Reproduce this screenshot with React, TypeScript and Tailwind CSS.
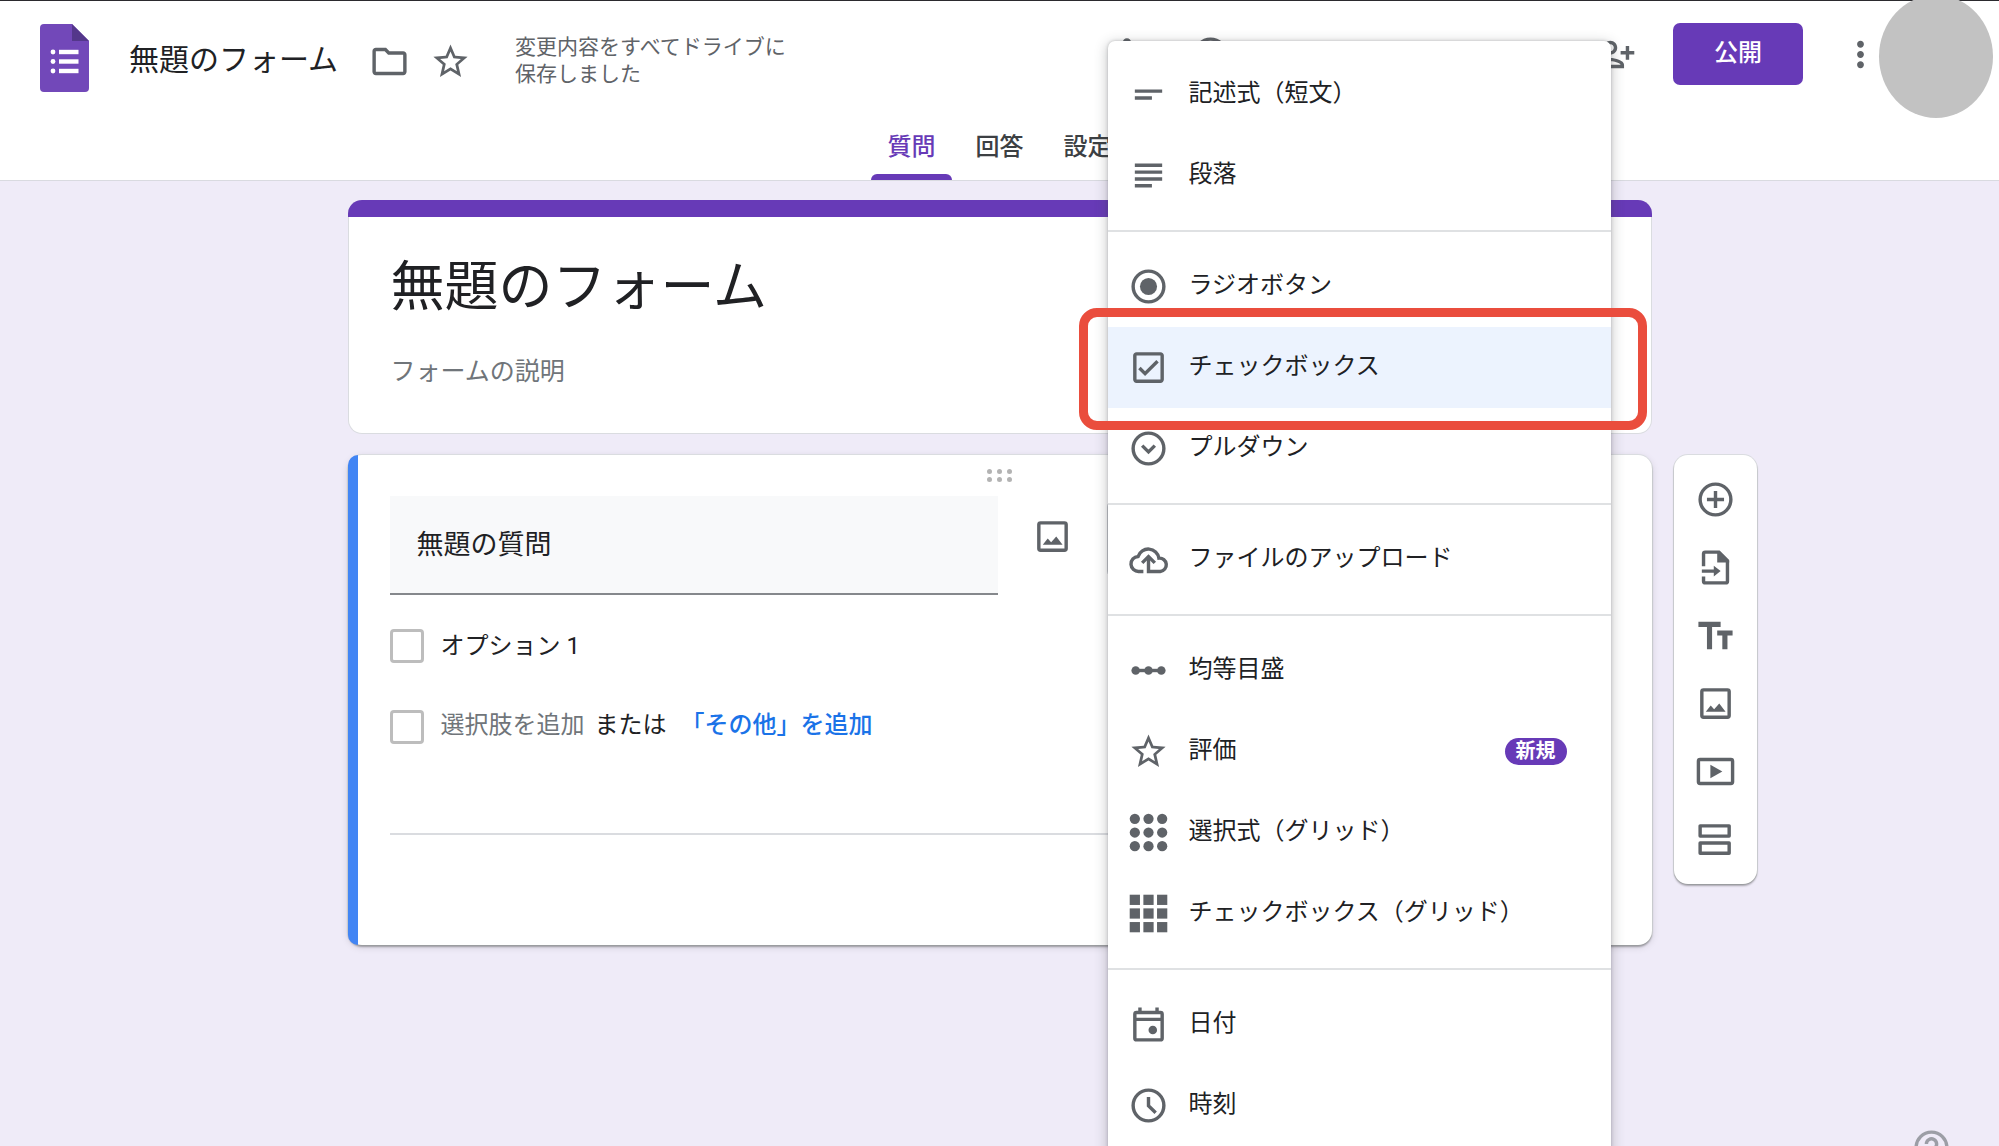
import React from "react";
import {
  MdLink,
  MdMoreVert,
  MdOutlineExtension,
  MdOutlineFolder,
  MdOutlinePalette,
  MdOutlineRemoveRedEye,
  MdRedo,
  MdStarBorder,
  MdUndo,
} from "react-icons/md";

function Icon({ children }: { children: React.ReactNode }) {
  return (
    <svg viewBox="0 0 24 24" className="size-[41px] shrink-0" fill="currentColor" aria-hidden="true">
      {children}
    </svg>
  );
}

const line = { fill: "none", stroke: "currentColor", strokeWidth: 2 };
const steps = [4, 12, 20];

const ShortText = () => <Icon><path d="M4 9h16v2H4zm0 4h10v2H4z" /></Icon>;
const Paragraph = () => <Icon><path d="M4 5h16v2H4zm0 4h16v2H4zm0 4h16v2H4zm0 4h10v2H4z" /></Icon>;
const Radio = () => (
  <Icon>
    <circle cx="12" cy="12" r="9" {...line} />
    <circle cx="12" cy="12" r="5" />
  </Icon>
);
const CheckBox = () => (
  <Icon>
    <path d="M19 3H5c-1.1 0-2 .9-2 2v14c0 1.1.9 2 2 2h14c1.1 0 2-.9 2-2V5c0-1.1-.9-2-2-2zm0 16H5V5h14v14zM17.99 9l-1.41-1.42-6.59 6.59-2.58-2.57-1.42 1.41 4 3.99z" />
  </Icon>
);
const DropDown = () => (
  <Icon>
    <circle cx="12" cy="12" r="9" {...line} />
    <path d="M8.3 10.3L12 14l3.7-3.7" {...line} />
  </Icon>
);
const CloudUpload = () => (
  <Icon>
    <path d="M9 19H6.4A4.4 4.4 0 0 1 5.9 10.2A6.3 6.3 0 0 1 18.1 11.2A3.9 3.9 0 0 1 18.9 19H12V10.4" {...line} />
    <path d="M8.3 14L12 10.3l3.7 3.7" {...line} />
  </Icon>
);
const LinearScale = () => (
  <Icon>
    <path d="M4 12h16" {...line} />
    <circle cx="4.5" cy="12" r="2.5" />
    <circle cx="12" cy="12" r="2.5" />
    <circle cx="19.5" cy="12" r="2.5" />
  </Icon>
);
const Star = () => <MdStarBorder className="size-[41px] shrink-0" aria-hidden="true" />;
const DotGrid = () => (
  <Icon>{steps.map((y) => steps.map((x) => <circle key={`${x}-${y}`} cx={x} cy={y} r="3" />))}</Icon>
);
const SquareGrid = () => (
  <Icon>
    {steps.map((y) => steps.map((x) => <rect key={`${x}-${y}`} x={x - 3} y={y - 3} width="6" height="6" />))}
  </Icon>
);
const CalendarIcon = () => (
  <Icon>
    <rect x="4" y="5" width="16" height="16" rx="1" {...line} />
    <path d="M4 9h16M7 2v3M17 2v3" {...line} />
    <circle cx="14.5" cy="15.2" r="2.5" />
  </Icon>
);
const Clock = () => (
  <Icon>
    <circle cx="12" cy="12" r="9" {...line} />
    <path d="M12 7v5.2l4.2 4" {...line} />
  </Icon>
);
const AddCircle = () => (
  <Icon>
    <circle cx="12" cy="12" r="9" {...line} />
    <path d="M12 7v10M7 12h10" {...line} />
  </Icon>
);
const ImportDoc = () => (
  <Icon>
    <path d="M5 11.2V4a1 1 0 0 1 1-1h8l5 5v12a1 1 0 0 1-1 1H6a1 1 0 0 1-1-1v-2.8" {...line} />
    <path d="M13 2.5h1.5L20 8v1h-7zM4 13.1h7V11l4 3.1-4 3.1v-2.1H4z" />
  </Icon>
);
const TextFields = () => <Icon><path d="M2 4v3h5v13h3V7h5V4H2zm20 5h-9v3h3v8h3v-8h3z" /></Icon>;
const ImageIcon = () => (
  <Icon>
    <rect x="4" y="4" width="16" height="16" rx="1" {...line} />
    <path d="M6.3 16.8l2.9-3.7 2 2.2 3-3.3 3.7 4.8z" />
  </Icon>
);
const Video = () => (
  <Icon>
    <rect x="2" y="5" width="20" height="14" rx="1" {...line} />
    <path d="M9 8v8l7-4z" />
  </Icon>
);
const Sections = () => (
  <Icon>
    <rect x="3" y="4" width="17" height="6" {...line} strokeLinejoin="round" />
    <rect x="3" y="14" width="17" height="6" {...line} strokeLinejoin="round" />
  </Icon>
);
const PersonAdd = () => (
  <Icon>
    <path d="M13 8c0-2.21-1.79-4-4-4S5 5.79 5 8s1.79 4 4 4 4-1.79 4-4zm-2 0c0 1.1-.9 2-2 2s-2-.9-2-2 .9-2 2-2 2 .9 2 2zM1 18v2h16v-2c0-2.66-5.33-4-8-4s-8 1.34-8 4zm2 0c.2-.71 3.3-2 6-2 2.69 0 5.78 1.28 6 2H3zm17-3v-3h3v-2h-3V7h-2v3h-3v2h3v3h2z" />
  </Icon>
);
const Help = () => (
  <Icon>
    <circle cx="12" cy="12" r="9" {...line} />
    <path d="M9 10a3 3 0 1 1 4.6 2.5c-1 .7-1.6 1.2-1.6 2.5M12 16v2" {...line} />
  </Icon>
);

function FormsLogo() {
  return (
    <svg viewBox="0 0 49 68" className="h-[68px] w-[49px] shrink-0" aria-hidden="true">
      <path d="M4 0h28l17 17v47a4 4 0 0 1-4 4H4a4 4 0 0 1-4-4V4a4 4 0 0 1 4-4z" fill="#7248b9" />
      <path d="M32 0l17 17H32z" fill="#54378b" />
      {[28, 37.5, 47].map((y) => (
        <g key={y} fill="#fff">
          <circle cx="13" cy={y} r="2.4" />
          <rect x="19" y={y - 2.2} width="19.5" height="4.4" />
        </g>
      ))}
    </svg>
  );
}

function IconButton({ label, children }: { label: string; children: React.ReactNode }) {
  return (
    <button type="button" aria-label={label} className="shrink-0 text-[#5f6368]">
      {children}
    </button>
  );
}

type Item = { label: string; icon: () => React.ReactElement; active?: boolean; badge?: string };

const groups: Item[][] = [
  [
    { label: "記述式（短文）", icon: ShortText },
    { label: "段落", icon: Paragraph },
  ],
  [
    { label: "ラジオボタン", icon: Radio },
    { label: "チェックボックス", icon: CheckBox, active: true },
    { label: "プルダウン", icon: DropDown },
  ],
  [{ label: "ファイルのアップロード", icon: CloudUpload }],
  [
    { label: "均等目盛", icon: LinearScale },
    { label: "評価", icon: Star, badge: "新規" },
    { label: "選択式（グリッド）", icon: DotGrid },
    { label: "チェックボックス（グリッド）", icon: SquareGrid },
  ],
  [
    { label: "日付", icon: CalendarIcon },
    { label: "時刻", icon: Clock },
  ],
];

function MenuItem({ item }: { item: Item }) {
  const Glyph = item.icon;
  return (
    <li role="none" className="relative">
      <button
        type="button"
        role="menuitem"
        className={
          item.active
            ? "flex h-[81px] w-full items-center bg-[#ecf3fe] pr-11 pl-5 text-left"
            : "flex h-[81px] w-full items-center pr-11 pl-5 text-left"
        }
      >
        <span className="text-[#5f6368]">
          <Glyph />
        </span>
        <span className="ml-5 flex-1 pb-1 whitespace-nowrap">{item.label}</span>
        {item.badge && (
          <span className="rounded-full bg-[#673ab7] px-[11px] text-xl leading-[27px] font-bold text-white">
            {item.badge}
          </span>
        )}
      </button>
      {item.active && (
        <span className="pointer-events-none absolute -top-[19px] -right-9 -bottom-[22px] -left-[29px] z-10 rounded-[18px] border-[9px] border-[#ea4d3d]" />
      )}
    </li>
  );
}

function TypeMenu() {
  return (
    <div
      role="menu"
      aria-label="質問の形式"
      className="absolute -top-[459px] left-0 z-20 w-[503px] rounded-[7px] bg-white pt-[13px] pb-3 text-2xl text-[#202124] shadow-[0_3px_12px_2px_rgba(60,64,67,0.25),0_0_3px_rgba(60,64,67,0.3)]"
    >
      {groups.map((group, i) => (
        <ul
          key={i}
          role="none"
          className={i > 0 ? "mt-[14px] border-t-2 border-[#dfe1e3] pt-[14px]" : ""}
        >
          {group.map((item) => (
            <MenuItem key={item.label} item={item} />
          ))}
        </ul>
      ))}
    </div>
  );
}

const checkboxClass = "size-[34px] shrink-0 appearance-none rounded-[4px] border-[3px] border-[#bdbdbd] bg-white";

export default function App() {
  return (
    <div className="relative h-screen overflow-hidden bg-[#efebf8] font-[Roboto,'Noto_Sans_CJK_JP',sans-serif] text-2xl text-[#202124]">
      <header className="border-t border-b border-t-[#2b2a2e] border-b-[#d9dae0] bg-white">
        <div className="flex h-[116px] items-start justify-between pr-[6px] pl-10">
          <div className="flex h-[114px] items-center">
            <FormsLogo />
            <span className="mt-1 ml-10 text-3xl whitespace-nowrap">無題のフォーム</span>
            <div className="mt-[6px] ml-[31px] flex gap-5">
              <IconButton label="フォルダに移動">
                <MdOutlineFolder className="size-[41px]" />
              </IconButton>
              <IconButton label="スターを付ける">
                <Star />
              </IconButton>
            </div>
            <p className="mt-[6px] ml-11 text-[21px] leading-[27px] text-[#5f6368]">
              変更内容をすべてドライブに
              <br />
              保存しました
            </p>
          </div>
          <div className="flex h-[106px] items-center">
            <div className="flex gap-10">
              <IconButton label="アドオン"><MdOutlineExtension className="size-[41px]" /></IconButton>
              <IconButton label="テーマをカスタマイズ"><MdOutlinePalette className="size-[41px]" /></IconButton>
              <IconButton label="プレビュー"><MdOutlineRemoveRedEye className="size-[41px]" /></IconButton>
              <IconButton label="元に戻す"><MdUndo className="size-[41px]" /></IconButton>
              <IconButton label="やり直す"><MdRedo className="size-[41px]" /></IconButton>
              <IconButton label="リンクをコピー"><MdLink className="size-[41px]" /></IconButton>
              <IconButton label="共同編集者を追加"><PersonAdd /></IconButton>
            </div>
            <button
              type="button"
              className="ml-[37px] h-[62px] w-[130px] shrink-0 rounded-[7px] bg-[#673ab7] pb-[2px] font-medium text-white"
            >
              公開
            </button>
            <div className="ml-[37px] flex">
              <IconButton label="その他"><MdMoreVert className="size-[41px]" /></IconButton>
            </div>
            <div className="mt-1 -ml-[2px] h-[123px] w-[114px] shrink-0 rounded-[50%] bg-[#c2c2c2]" />
          </div>
        </div>
        <nav className="flex h-[63px] justify-center gap-[7px] font-medium text-[#3c4043]">
          <a href="#questions" className="flex w-[81px] flex-col items-center justify-between pt-[14px] text-[#673ab7]">
            質問
            <span className="h-[6px] w-full rounded-t-[6px] bg-[#673ab7]" />
          </a>
          <a href="#responses" className="w-[81px] pt-[14px] text-center">回答</a>
          <a href="#settings" className="w-[81px] pt-[14px] text-center">設定</a>
        </nav>
      </header>

      <main className="grid grid-cols-[1fr_minmax(0,1304px)_1fr] gap-y-[21px] pt-[19px]">
        <section className="col-start-2 h-[234px] rounded-[14px] border border-t-0 border-[#dadce0] bg-white">
          <div className="-mx-px h-[17px] rounded-t-[14px] bg-[#673ab7]" />
          <div className="flex flex-col px-[42px] pt-[22px]">
            <input
              aria-label="フォームのタイトル"
              defaultValue="無題のフォーム"
              className="h-[86px] w-full text-[54px] outline-none"
            />
            <input
              aria-label="フォームの説明"
              placeholder="フォームの説明"
              className="mt-7 h-9 w-full text-[25px] outline-none placeholder:text-[#70757a]"
            />
          </div>
        </section>

        <section className="col-start-2 flex h-[490px] rounded-[14px] bg-white shadow-[0_2px_2px_rgba(0,0,0,0.3),0_0_0_1px_#dadce0,0_2px_7px_1px_rgba(0,0,0,0.1)]">
          <div className="w-[10px] shrink-0 rounded-l-[14px] bg-[#4285f4]" />
          <div className="min-w-0 flex-1 pr-[42px] pl-[32px]">
            <div className="flex h-[41px] justify-center pt-[14px]">
              <button type="button" aria-label="質問を移動" className="grid h-[13px] grid-cols-3 gap-x-[5px] gap-y-[3px]">
                {[0, 1, 2, 3, 4, 5].map((n) => (
                  <span key={n} className="size-[5px] rounded-full bg-[#b3b3b3]" />
                ))}
              </button>
            </div>
            <div className="flex items-start">
              <input
                aria-label="質問"
                defaultValue="無題の質問"
                className="h-[99px] w-[608px] border-b-2 border-[#85888c] bg-[#f8f9fa] px-[27px] pb-1 text-[27px] outline-none"
              />
              <div className="mt-5 ml-[34px] flex">
                <IconButton label="画像を追加"><ImageIcon /></IconButton>
              </div>
              <div className="relative mt-1 ml-[35px] flex-1">
                <button
                  type="button"
                  aria-haspopup="menu"
                  aria-label="チェックボックス"
                  className="-ml-px block h-[78px] w-[503px] rounded-[7px] border border-[#c4c7cc]"
                />
                <TypeMenu />
              </div>
            </div>
            <div className="mt-[33px] flex h-[36px] items-center gap-[17px]">
              <input type="checkbox" aria-label="オプション 1" className={checkboxClass} />
              <input aria-label="選択肢のテキスト" defaultValue="オプション 1" className="w-[500px] outline-none" />
            </div>
            <div className="mt-[45px] flex h-[36px] items-center">
              <input type="checkbox" aria-label="選択肢を追加" className={checkboxClass} />
              <div className="ml-[17px] flex pb-1 whitespace-nowrap">
                <button type="button" className="text-[#70757a]">選択肢を追加</button>
                <span className="ml-[10px]">または</span>
                <button type="button" className="ml-[14px] font-medium text-[#1a73e8]">「その他」を追加</button>
              </div>
            </div>
            <hr className="mt-[88px] border-t-2 border-[#dadce0]" />
          </div>
        </section>

        <div
          role="toolbar"
          aria-label="項目の追加"
          className="col-start-3 ml-[22px] flex w-[83px] flex-col items-center gap-[27px] self-start justify-self-start rounded-[14px] bg-white py-6 shadow-[0_2px_2px_rgba(0,0,0,0.3),0_0_0_1px_#dadce0]"
        >
          <IconButton label="質問を追加"><AddCircle /></IconButton>
          <IconButton label="質問をインポート"><ImportDoc /></IconButton>
          <IconButton label="タイトルと説明を追加"><TextFields /></IconButton>
          <IconButton label="画像を追加"><ImageIcon /></IconButton>
          <IconButton label="動画を追加"><Video /></IconButton>
          <IconButton label="セクションを追加"><Sections /></IconButton>
        </div>
      </main>

      <button type="button" aria-label="ヘルプ" className="absolute right-[47px] -bottom-[22px] text-[#9c9ea6]">
        <Help />
      </button>
    </div>
  );
}
